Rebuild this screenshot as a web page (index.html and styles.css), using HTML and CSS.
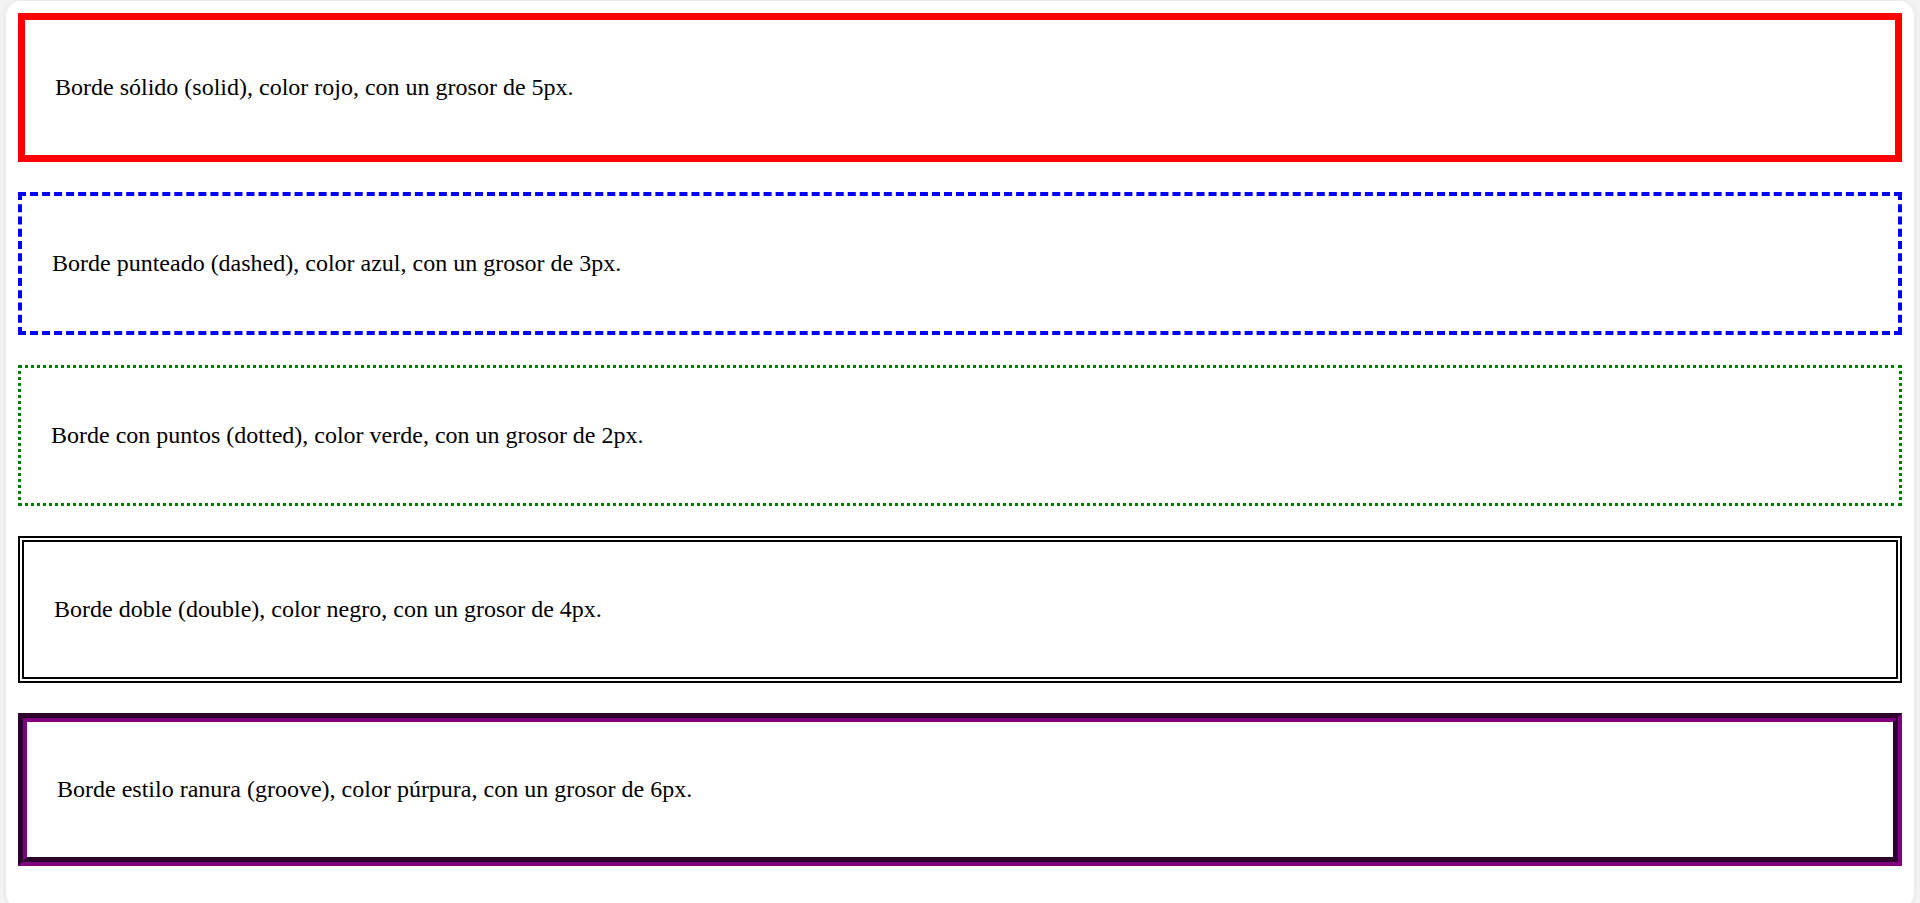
FILE: index.html
```html
<!DOCTYPE html>
<html lang="es">
<head>
<meta charset="utf-8">
<title>Estilos de borde</title>
<link rel="stylesheet" href="styles.css">
</head>
<body>
<div class="container">
  <div class="box box-solid"><p>Borde sólido (solid), color rojo, con un grosor de 5px.</p></div>
  <div class="box box-dashed"><p>Borde punteado (dashed), color azul, con un grosor de 3px.</p></div>
  <div class="box box-dotted"><p>Borde con puntos (dotted), color verde, con un grosor de 2px.</p></div>
  <div class="box box-double"><p>Borde doble (double), color negro, con un grosor de 4px.</p></div>
  <div class="box box-groove"><p>Borde estilo ranura (groove), color púrpura, con un grosor de 6px.</p></div>
</div>
</body>
</html>
```
FILE: styles.css
```css
html, body {
  margin: 0;
  background: #f4f4f4;
}
body {
  padding: 1px 6px 0;
  font-family: "Liberation Serif", "Times New Roman", serif;
  color: #000;
}
.container {
  background: #fff;
  border-radius: 15px;
  padding: 12px;
  box-shadow: 0 0 8px rgba(0, 0, 0, 0.08);
}
.box {
  padding: 0 30px;
  margin-bottom: 30px;
}
.box p {
  margin: 54px 0;
  font-size: 24px;
  line-height: 27px;
}
.box-solid { border: 7px solid red; }
.box-dashed { border: 4px dashed blue; }
.box-dotted { border: 3px dotted green; }
.box-double { border: 6px double black; }
.box-groove { border: 9px groove purple; }
```
